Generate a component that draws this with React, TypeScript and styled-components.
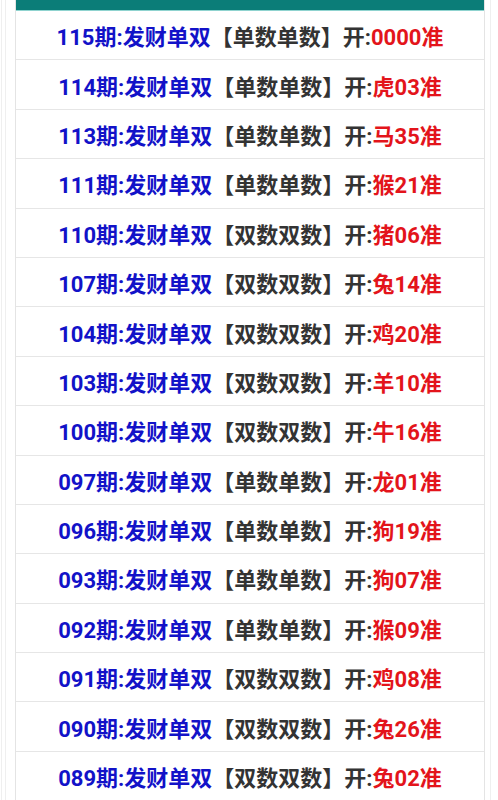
import styled, { createGlobalStyle } from 'styled-components';

const GlobalStyle = createGlobalStyle`
  html, body {
    margin: 0;
    padding: 0;
    background: #ffffff;
  }
  body {
    font-family: Roboto, 'Noto Sans CJK SC', sans-serif;
  }
`;

const Frame = styled.div`
  margin: 0 7px 0 1px;
  border-left: 1px solid #efefef;
  border-right: 1px solid #efefef;
  height: 800px;
  overflow: hidden;
`;

const Inner = styled.div`
  margin-left: 3px;
  border-left: 1px solid #efefef;
  padding: 0 5px 0 9px;
  height: 100%;
`;

const Board = styled.div`
  border-left: 1px solid #e4e4e4;
  border-right: 1px solid #e4e4e4;
  display: flex;
  flex-direction: column;
`;

const TopBar = styled.div`
  height: 10px;
  background: #0b7d78;
  border-bottom: 1px solid #8fd3cf;
`;

const Row = styled.div`
  height: 49.4px;
  box-sizing: border-box;
  border-bottom: 1px solid #e6e6e6;
  display: flex;
  align-items: center;
  justify-content: center;
  font-size: 22px;
  font-weight: 700;
  white-space: nowrap;
  &:first-of-type {
    height: 50px;
  }
`;

const Issue = styled.span`
  color: #1212c8;
`;

const Pick = styled.span`
  color: #333333;
`;

const Result = styled.span`
  color: #e3141b;
`;

interface Draw {
  no: string;
  pick: string;
  result: string;
}

const draws: Draw[] = [
  { no: '115', pick: '单数单数', result: '0000' },
  { no: '114', pick: '单数单数', result: '虎03' },
  { no: '113', pick: '单数单数', result: '马35' },
  { no: '111', pick: '单数单数', result: '猴21' },
  { no: '110', pick: '双数双数', result: '猪06' },
  { no: '107', pick: '双数双数', result: '兔14' },
  { no: '104', pick: '双数双数', result: '鸡20' },
  { no: '103', pick: '双数双数', result: '羊10' },
  { no: '100', pick: '双数双数', result: '牛16' },
  { no: '097', pick: '单数单数', result: '龙01' },
  { no: '096', pick: '单数单数', result: '狗19' },
  { no: '093', pick: '单数单数', result: '狗07' },
  { no: '092', pick: '单数单数', result: '猴09' },
  { no: '091', pick: '双数双数', result: '鸡08' },
  { no: '090', pick: '双数双数', result: '兔26' },
  { no: '089', pick: '双数双数', result: '兔02' },
];

const App = () => {
  return (
    <>
      <GlobalStyle />
      <Frame>
        <Inner>
          <Board>
            <TopBar />
            {draws.map((d) => (
              <Row key={d.no}>
                <Issue>{d.no}期:发财单双</Issue>
                <Pick>【{d.pick}】开:</Pick>
                <Result>{d.result}准</Result>
              </Row>
            ))}
          </Board>
        </Inner>
      </Frame>
    </>
  );
};

export default App;
